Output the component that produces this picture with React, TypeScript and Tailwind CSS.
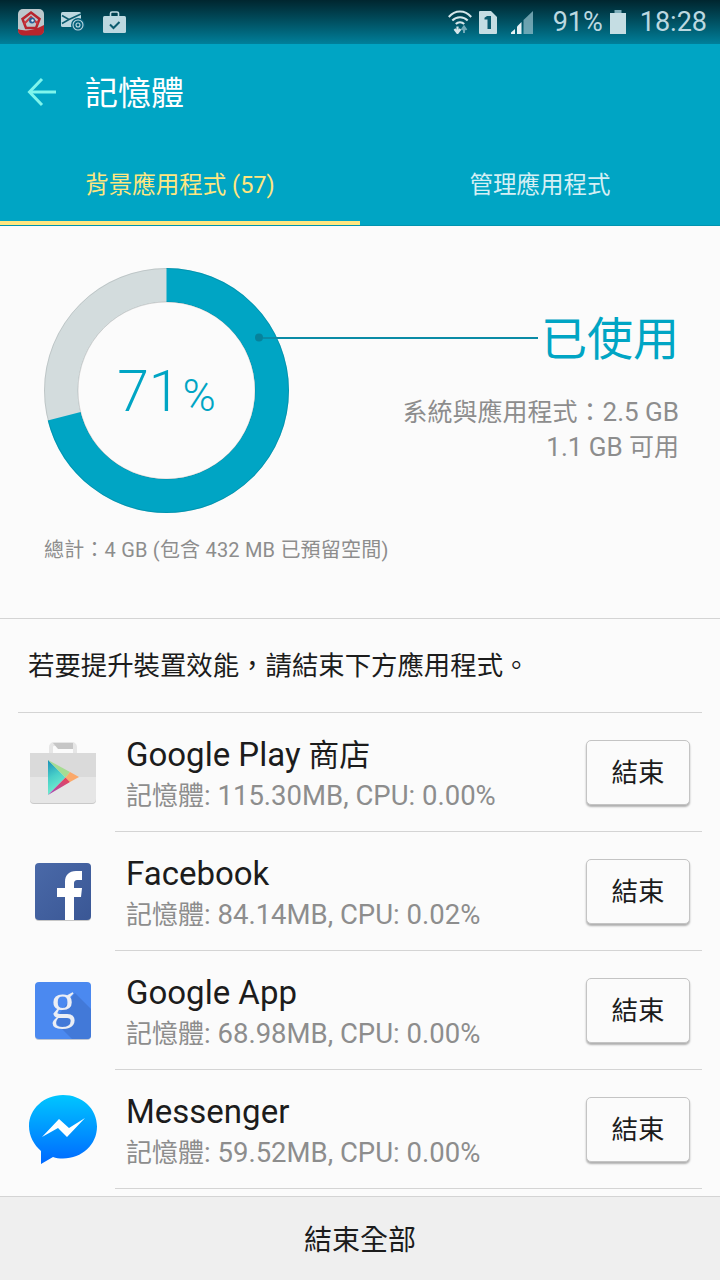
const FONT = "font-['Roboto','Noto_Sans_CJK_TC',sans-serif]";

function BackArrow() {
  return (
    <svg width="32" height="32" viewBox="0 0 32 32" fill="none" stroke="#7ff5ec" strokeWidth="3">
      <path d="M30 16H4" />
      <path d="M16 3 3.5 16 16 29" />
    </svg>
  );
}

function StatusLeft() {
  return (
    <div className="flex items-center">
      <svg width="26" height="27" viewBox="0 0 26 27" className="ml-[18px]">
        <rect width="26" height="26" rx="5" fill="#bcc8cc" />
        <path d="M0 20c8 3 17 1 26-4v5a5 5 0 0 1-5 5.500H5a5 5 0 0 1-5-5z" fill="#b8252d" />
        <path d="M13 3.500 21.500 10 18 19H8L4.500 10z" fill="none" stroke="#b8252d" strokeWidth="2.500" />
        <path d="M6 15 13 8l7 7" fill="none" stroke="#c9383d" strokeWidth="2" />
        <circle cx="14" cy="11.500" r="3" fill="#2b5f95" />
        <circle cx="14.500" cy="11.500" r="1.200" fill="#e8eef2" />
      </svg>
      <svg width="24" height="20" viewBox="0 0 24 20" className="ml-[17px]">
        <rect x="0" y="0" width="20" height="15" rx="1.500" fill="#bcd8e0" />
        <path d="M1 3.500 8 7.500 1 11.500M20 2 8 7.500" fill="none" stroke="#0b5b6e" strokeWidth="1.600" />
        <circle cx="17" cy="13" r="7" fill="#04607a" />
        <circle cx="17" cy="13" r="5" fill="none" stroke="#bcd8e0" strokeWidth="1.100" />
        <circle cx="17" cy="13" r="2" fill="none" stroke="#bcd8e0" strokeWidth="1.100" />
      </svg>
      <svg width="23" height="22" viewBox="0 0 23 22" className="ml-[18px]">
        <path d="M7.500 5V2.500A1.500 1.500 0 0 1 9 1h5a1.500 1.500 0 0 1 1.500 1.500V5" fill="none" stroke="#bcd8e0" strokeWidth="1.600" />
        <rect x="0" y="5" width="23" height="17" rx="1.500" fill="#bcd8e0" />
        <path d="M7 13.500 10.500 17l6-6" fill="none" stroke="#0b5b6e" strokeWidth="2" />
      </svg>
    </div>
  );
}

function StatusRight() {
  return (
    <div className="flex items-center text-[27px] leading-none text-[#bcd8e0]">
      <svg width="24" height="24" viewBox="0 0 24 24" fill="none" stroke="#d5e6ea" strokeWidth="2">
        <path d="M.8 7C7-.3 17-.3 23.200 7" />
        <path d="M4.300 10.500c4.300-4.500 11.100-4.500 15.400 0" />
        <path d="M7.800 14c2.300-2.500 6.100-2.500 8.400 0" />
        <path d="M9.500 16.500V22M6.500 19l3 4 3-4" strokeWidth="2.200" />
        <path d="M16 23v-6M13.500 20l2.500-3.500 2.500 3.500" stroke="#6fa9b8" strokeWidth="2" />
      </svg>
      <svg width="18" height="23" viewBox="0 0 18 23" className="ml-[7px]">
        <path d="M1 0h11l6 6v16a1 1 0 0 1-1 1H1a1 1 0 0 1-1-1V1a1 1 0 0 1 1-1z" fill="#c5dde3" />
        <path d="M8 5h4v13H8.500V8.500H5.500V6.800z" fill="#0b5b6e" />
      </svg>
      <svg width="22" height="23" viewBox="0 0 22 23" className="ml-[14px]">
        <path d="M0 23h4v-5l-4 3.500z" fill="#e5f1f4" />
        <path d="M6 23h4.500V11L6 15.500z" fill="#e5f1f4" />
        <path d="M12.500 23H22V0l-9.500 9z" fill="#8fbcc8" opacity=".75" />
      </svg>
      <span className="ml-[20px]">91%</span>
      <svg width="16" height="24" viewBox="0 0 16 24" className="ml-[7px]">
        <path d="M4.500 0h7v3h-7z" fill="#7faebb" />
        <path d="M0 3h16v21H0z" fill="#c5dde3" />
      </svg>
      <span className="ml-[14px] mr-[13px]">18:28</span>
    </div>
  );
}

function Donut() {
  // r=105.5, 71% 위치까지 호를 그림
  const c = 2 * Math.PI * 105.5;
  return (
    <svg width="245" height="245" viewBox="0 0 245 245" className="block">
      <circle cx="122.500" cy="122.500" r="105.500" fill="none" stroke="#d3dcdd" strokeWidth="34" />
      <circle
        cx="122.500"
        cy="122.500"
        r="105.500"
        fill="none"
        stroke="#00a5c4"
        strokeWidth="34"
        strokeDasharray={`${c * 0.71} ${c}`}
        transform="rotate(-90 122.500 122.500)"
      />
      <circle cx="122.500" cy="122.500" r="122" fill="none" stroke="#000" strokeOpacity=".1" strokeWidth="1" />
      <circle cx="122.500" cy="122.500" r="88.500" fill="#fbfbfb" stroke="#000" strokeOpacity=".14" strokeWidth="1" />
      <circle cx="215" cy="69.500" r="4" fill="#06829b" />
    </svg>
  );
}

function PlayIcon() {
  return (
    <svg width="66" height="62" viewBox="0 0 66 62">
      <defs>
        <linearGradient id="playLeft" x1="0" y1="0" x2="0.3" y2="1">
          <stop offset="0" stopColor="#1b8fb8" />
          <stop offset="0.5" stopColor="#48cfc8" />
          <stop offset="1" stopColor="#78f0d0" />
        </linearGradient>
        <linearGradient id="playBottom" x1="1" y1="0" x2="0" y2="1">
          <stop offset="0" stopColor="#ee4450" />
          <stop offset="1" stopColor="#a04cc0" />
        </linearGradient>
      </defs>
      <path d="M21 11V5a3 3 0 0 1 3-3h18a3 3 0 0 1 3 3v6" fill="none" stroke="#e6e6e6" strokeWidth="4" />
      <path d="M23 1h20v6H28z" fill="#c6c6c6" />
      <path d="M0 57v1a4 4 0 0 0 4 4h58a4 4 0 0 0 4-4v-1z" fill="#c9c9c9" />
      <path d="M0 11h66v46a4 4 0 0 1-4 4H4a4 4 0 0 1-4-4z" fill="#e6e6e6" />
      <path d="M0 11h66v24H0z" fill="#dadada" />
      <path d="M18 18v35l17.500-17.500z" fill="url(#playLeft)" />
      <path d="M18 18 35.500 35.500 40 30z" fill="#a6dc92" />
      <path d="M40 30l9 5-9 5-4.500-4.500z" fill="#fba86a" />
      <path d="M18 53 35.500 35.500 40 40z" fill="url(#playBottom)" />
    </svg>
  );
}

function FacebookIcon() {
  return (
    <svg width="56" height="58" viewBox="0 0 56 58">
      <defs>
        <linearGradient id="fbBg" x1="0" y1="0" x2="1" y2="1">
          <stop offset="0" stopColor="#4a69a8" />
          <stop offset="1" stopColor="#3a5795" />
        </linearGradient>
      </defs>
      <rect y="1" width="56" height="57" rx="4" fill="#c7c7c7" />
      <rect width="56" height="57" rx="4" fill="url(#fbBg)" />
      <path d="M30 57V34h-8v-9h8v-6c0-7 4-11 11-11h6v9h-4c-3 0-4 1-4 4v4h8l-1 9h-7v23z" fill="#fff" />
    </svg>
  );
}

function GoogleIcon() {
  return (
    <svg width="56" height="58" viewBox="0 0 56 58" className="overflow-visible">
      <rect y="1" width="56" height="57" rx="4" fill="#bcc4d2" />
      <rect width="56" height="57" rx="4" fill="#4b89f0" />
      <path d="M40 11 56 27v26a4 4 0 0 1-4 4H37L19 39z" fill="#4279d8" />
      <text x="28" y="36" textAnchor="middle" fontFamily="Liberation Serif" fontSize="50" fill="#ebeef5">
        g
      </text>
    </svg>
  );
}

function MessengerIcon() {
  return (
    <svg width="68" height="69" viewBox="0 0 68 69">
      <defs>
        <linearGradient id="ms" x1="0" y1="0" x2="0" y2="1">
          <stop offset="0" stopColor="#00c6ff" />
          <stop offset="1" stopColor="#0068ff" />
        </linearGradient>
      </defs>
      <path d="M34 0C15 0 0 14 0 31c0 10 5 19 12 25v13l12-7c3 1 6 1.500 10 1.500 19 0 34-14 34-32S53 0 34 0z" fill="url(#ms)" />
      <path d="M13 42 30 24l10 9 16-10-18 19-9-9z" fill="#fff" />
    </svg>
  );
}

const APPS = [
  { name: "Google Play", suffix: " 商店", mem: "115.30MB", cpu: "0.00%", icon: <PlayIcon /> },
  { name: "Facebook", suffix: "", mem: "84.14MB", cpu: "0.02%", icon: <FacebookIcon /> },
  { name: "Google App", suffix: "", mem: "68.98MB", cpu: "0.00%", icon: <GoogleIcon /> },
  { name: "Messenger", suffix: "", mem: "59.52MB", cpu: "0.00%", icon: <MessengerIcon /> },
];

function AppRow({ app }: { app: (typeof APPS)[number] }) {
  return (
    <div className="flex h-[119px] items-center">
      <div className="flex w-[97px] shrink-0 items-center justify-center pr-[7px]">{app.icon}</div>
      <div className="flex h-full flex-1 items-center border-b border-[#d4d4d4] pl-[11px]">
        <div className="flex-1 pt-[6px]">
          <div className="text-[33px] leading-[40px] text-[#1c1c1c]">
            {app.name}
            <span className="text-[31px]">{app.suffix}</span>
          </div>
          <div className="text-[26px] leading-[40px] text-[#8d8d8d]">
            記憶體<span className="text-[27.5px]">: {app.mem}, CPU: {app.cpu}</span>
          </div>
        </div>
        <button className="mr-[12px] h-[65px] w-[104px] rounded-[5px] border border-[#c4c4c4] bg-[#fbfbfb] pt-[1px] text-[26.5px] text-[#1c1c1c] shadow-[0_2px_2px_rgba(0,0,0,0.3)]">
          結束
        </button>
      </div>
    </div>
  );
}

export default function App() {
  return (
    <div className={`${FONT} flex h-[1280px] w-[720px] flex-col overflow-hidden bg-[#fbfbfb]`}>
      <div className="flex h-[44px] shrink-0 items-center justify-between bg-gradient-to-b from-[#00262f] to-[#00809b]">
        <StatusLeft />
        <StatusRight />
      </div>

      <div className="h-[182px] shrink-0 bg-[#00a5c4]">
        <div className="flex h-[96px] items-center pl-[26px]">
          <BackArrow />
          <h1 className="ml-[27px] pt-[3px] text-[33px] font-normal text-white">記憶體</h1>
        </div>
        <div className="flex h-[85px] text-[23.5px]">
          <div className="flex w-[360px] items-center justify-center border-b-[4px] border-[#ffe680] pt-[11px] text-[#ffe680]">
            背景應用程式 (57)
          </div>
          <div className="flex w-[360px] items-center justify-center pt-[7px] text-[#d5eff4]">管理應用程式</div>
        </div>
        <div className="h-px bg-[#0094b0]" />
      </div>

      <div className="relative h-[393px] shrink-0 border-b border-[#d4d4d4]">
        <div className="flex pl-[44px] pr-[41px] pt-[42px]">
          <div className="relative h-[245px] w-[245px] shrink-0">
            <Donut />
            <div className="absolute inset-0 flex items-baseline justify-center pt-[95px] font-['Roboto'] font-light text-[#00a5c4]">
              <span className="text-[57px] leading-none">71</span>
              <span className="ml-[2px] text-[45px] leading-none">%</span>
            </div>
          </div>
          <div className="flex flex-1 flex-col items-end pt-[41px] text-[#8d8d8d]">
            <div className="text-[46px] leading-[60px] text-[#00a5c4]">已使用</div>
            <div className="mt-[26px] text-[25px] leading-[35px]">
              系統與應用程式：<span className="text-[26px]">2.5 GB</span>
            </div>
            <div className="text-[25px] leading-[35px]">
              <span className="text-[26px]">1.1 GB</span> 可用
            </div>
          </div>
        </div>
        <div className="mt-[23px] pl-[44px] text-[20px] leading-[28px] tracking-[0.2px] text-[#8d8d8d]">
          總計：4 GB (包含 432 MB 已預留空間)
        </div>
        <div className="absolute left-[263px] top-[111px] h-[1.5px] w-[275px] bg-[#0a8ba6]" />
      </div>

      <div className="min-h-0 flex-1 overflow-hidden">
        <div className="mx-[18px] flex h-[94px] items-center border-b border-[#d4d4d4] pl-[10px] pt-[3px] text-[26.4px] text-[#1c1c1c]">
          若要提升裝置效能，請結束下方應用程式。
        </div>
        <div className="mx-[18px]">
          {APPS.map((app) => (
            <AppRow key={app.name} app={app} />
          ))}
        </div>
      </div>

      <div className="flex h-[84px] shrink-0 items-center justify-center border-t border-[#d4d4d4] bg-[#efefef] pt-[4px] text-[28px] text-[#1c1c1c]">
        結束全部
      </div>
    </div>
  );
}
